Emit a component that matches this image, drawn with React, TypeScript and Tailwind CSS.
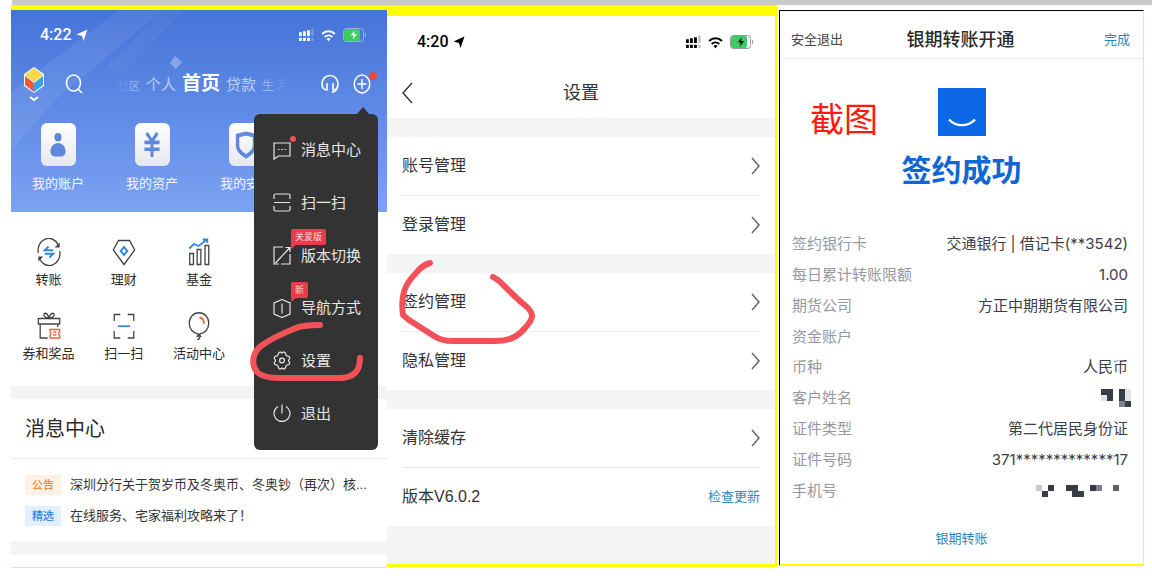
// src/App.tsx
import React from 'react';
import { clsx } from 'clsx';

const CJK = "font-['Liberation_Sans','Noto_Sans_CJK_SC',sans-serif]";

interface StatusBarProps {
  time: string;
  className?: string;
}

const StatusBar: React.FC<StatusBarProps> = ({ time, className }) => (
  <div className={clsx('flex items-center justify-between', className)}>
    <div className="flex items-center gap-1 font-['Roboto',sans-serif] text-base font-medium leading-5">
      <time>{time}</time>
      <svg viewBox="0 0 12 12" className="size-3" fill="currentColor" aria-hidden="true">
        <path d="M11.500 0.500 7.500 12 6 7 0.500 5.500z" />
      </svg>
    </div>
    <div className="flex items-center gap-[7px]">
      {/* dual SIM signal */}
      <svg viewBox="0 0 16 14" className="h-[14px] w-[15px]" fill="currentColor" aria-hidden="true">
        <path d="M0 4h3v4H0zM4.3 3h3v5h-3zM8.6 2h3v6h-3z" />
        <path d="M13 0h2.6v8H13zM13 10h2.6v3.5H13z" opacity="0.25" />
        <path d="M0 10h3v3.5H0zM4.3 10h3v3.5h-3zM8.6 10h3v3.5h-3z" />
      </svg>
      <svg viewBox="0 0 16 13" className="h-[13px] w-[15px]" fill="none" stroke="currentColor" strokeWidth="2.2" aria-hidden="true">
        <path d="M1.2 4.8a9.6 9.6 0 0 1 13.6 0" />
        <path d="M4 8a5.8 5.8 0 0 1 8 0" />
        <path d="M8 12.6 5.8 10.2a3.2 3.2 0 0 1 4.4 0z" fill="currentColor" stroke="none" />
      </svg>
      <svg viewBox="0 0 24 14" className="h-[14px] w-6" aria-hidden="true">
        <rect x="0.5" y="0.5" width="20" height="13" rx="3" fill="none" stroke="currentColor" opacity="0.4" />
        <rect x="1" y="1" width="16" height="12" rx="2" fill="#3ecb62" />
        <path d="M22 4.5v5c1.4-.6 1.4-4.4 0-5z" fill="currentColor" opacity="0.4" />
        <path d="M12 2 7.4 7.6h3L9.6 12l4.8-6h-3.2z" fill="currentColor" stroke="#3ecb62" strokeWidth="0.4" />
      </svg>
    </div>
  </div>
);

/* ---------- Bank home screen ---------- */

const services = [
  {
    label: '我的账户',
    icon: (
      <>
        <circle cx="12" cy="5" r="4" />
        <path d="M12 10.500c5 0 8.500 4 8.500 8 0 3.500-2.500 5-5 5h-7c-2.500 0-5-1.500-5-5 0-4 3.500-8 8.500-8z" />
      </>
    ),
  },
  {
    label: '我的资产',
    icon: <path d="M6 1 12 9 18 1M3.500 10h17M3.500 16.500h17M12 9v15" fill="none" stroke="currentColor" strokeWidth="3.400" />,
  },
  {
    label: '我的安全',
    icon: <path d="M12 1.500 21.500 3.500V13c0 5-4.500 8-9.500 10.500C7 21 2.500 18 2.500 13V3.500z" fill="none" stroke="currentColor" strokeWidth="3.800" />,
  },
];

const shortcuts = [
  {
    label: '转账',
    icon: (
      <>
        <path d="M2.500 15A11.500 12 0 0 1 24 7M25.500 13A11.500 12 0 0 1 4 21" />
        <path d="M25.500 4.500v5H20zM2.500 23.500v-5H8z" fill="currentColor" stroke="none" />
        <path d="M18.500 12.200H9.500l4-3.600M9.500 15.800h9l-4 3.600" stroke="#2f86e0" strokeWidth="2" />
      </>
    ),
  },
  {
    label: '理财',
    icon: (
      <>
        <path d="M8 2.500h12l5.500 9.500L14 26.500 2.500 12z" />
        <path d="m14 9 3.500 4-3.500 4-3.500-4z" stroke="#2f86e0" strokeWidth="2" />
      </>
    ),
  },
  {
    label: '基金',
    icon: (
      <>
        <path d="M4 15.500h4v11H4zM12 11.500h4v15h-4zM20.500 7.500h4v19h-4z" />
        <path d="m3.500 10.500 5-4.500 5 2 8.500-6M18 1.500h5V5" stroke="#2f86e0" strokeWidth="1.800" />
      </>
    ),
  },
  {
    label: '券和奖品',
    icon: (
      <>
        <path d="M2.500 6.500h23v5.500h-23zM4.500 12v14h8M23.500 12v3" />
        <path d="M14 6.500C11 6 8 4.500 8.500 2.500c.5-2 4-2 5.500 4 1.500-6 5-6 5.500-4 .5 2-2.500 3.500-5.500 4z" />
        <path d="M15 17.500h10.500v2.500c-1.500.5-1.500 3 0 3.500v2.500H15v-2.500c1.500-.5 1.500-3 0-3.500zM18.500 20h3.500M18.500 23h3.500" stroke="#e8663c" />
      </>
    ),
  },
  {
    label: '扫一扫',
    icon: (
      <>
        <path d="M3.500 9V2.500H10M18 2.500h6.500V9M24.500 19v7H18M10 26H3.500v-7" />
        <path d="M7.500 14.200h13" stroke="#2f86e0" strokeWidth="1.800" />
      </>
    ),
  },
  {
    label: '活动中心',
    icon: (
      <>
        <path d="M14 22.500C8 21 3.500 17 3.500 11 3.500 5 8 0.800 14 0.800S24.500 5 24.500 11c0 6-4.500 10-10.500 11.500zM14 22.500v2c1 1.500.5 3-2 3.300M11.500 25l2.500-2.500 2.500 2.500" />
        <path d="M14.500 5.500c3 .5 5 3 5 6.500" stroke="#e8663c" strokeWidth="1.800" />
      </>
    ),
  },
];

const notices = [
  { tag: '公告', tagClass: 'bg-[#fdf0e4] text-[#f08a34]', text: '深圳分行关于贺岁币及冬奥币、冬奥钞（再次）核...' },
  { tag: '精选', tagClass: 'bg-[#e2effc] text-[#2f86e0]', text: '在线服务、宅家福利攻略来了！' },
];

interface MenuItem {
  label: string;
  badge?: string;
  dot?: boolean;
  icon: React.ReactNode;
}

const menuItems: MenuItem[] = [
  {
    label: '消息中心',
    dot: true,
    icon: <path d="M1 2h16v13H5.500L1 18zM5 8.500h1.500M8.300 8.500h1.500M11.600 8.500h1.500" />,
  },
  {
    label: '扫一扫',
    icon: <path d="M1 6V2.500Q1 1 2.500 1h13Q17 1 17 2.500V6M1 9.500h16M1 13v3.500Q1 18 2.500 18h13q1.500 0 1.500-1.500V13" />,
  },
  {
    label: '版本切换',
    badge: '关爱版',
    icon: <path d="M10 1H1v17h2M8 18h9V8M2.500 17 16.500 2M12.500 1.500H17V6M1 13v5h5" />,
  },
  {
    label: '导航方式',
    badge: '新',
    icon: <path d="M9 0.500 17 4v11l-8 3.500L1 15V4zM9 4.500v10" />,
  },
  {
    label: '设置',
    icon: (
      <>
        <path d="M6 1.500 7.500 1 9 2l1.500-1 1.500.5 1.500 3.300 2.500.7.800 1.500L15.500 9.500l1.300 2.500-.8 1.500-2.500.7-1.500 3.300-1.500.5L9 17l-1.500 1-1.500-.5-1.500-3.300-2.500-.7-.8-1.500 1.300-2.500L1.200 7 2 5.500l2.500-.7z" />
        <circle cx="9" cy="9.500" r="2.400" />
      </>
    ),
  },
  {
    label: '退出',
    icon: <path d="M5 2.500a8 8 0 1 0 8 0M9 0.500v9" />,
  },
];

const MoreMenu: React.FC = () => (
  <div className="absolute right-[9px] top-[104px] w-[124px] rounded-md bg-[#333333] text-[#e6e6e6]">
    <svg viewBox="0 0 14 8" className="absolute -top-[7px] right-2 h-2 w-[14px]" aria-hidden="true">
      <path d="M0 8 7 0l7 8z" fill="#333333" />
    </svg>
    <ul className="grid h-[336px] grid-rows-6 py-[10px]">
      {menuItems.map((item) => (
        <li key={item.label} className="flex">
          <button type="button" className="relative flex flex-1 items-center gap-[10px] pl-[19px] text-[15px] leading-5">
            <svg viewBox="0 0 18 19" className="h-[19px] w-[18px]" fill="none" stroke="currentColor" strokeWidth="1.200" aria-hidden="true">
              {item.icon}
            </svg>
            {item.label}
            {item.dot && <span className="absolute left-9 top-3 size-[6px] rounded-full bg-[#f0505a]" />}
            {item.badge && (
              <span className="absolute left-[37px] top-0 rounded-xs rounded-bl-none bg-[#ea3a4c] px-1 text-[9px] leading-4 text-[#ffd9dc]">
                {item.badge}
                <svg viewBox="0 0 5 4" className="absolute left-0 top-full h-1 w-[5px]" aria-hidden="true">
                  <path d="M0 0h5L0 4z" fill="#ea3a4c" />
                </svg>
              </span>
            )}
          </button>
        </li>
      ))}
    </ul>
  </div>
);

const HomeScreen: React.FC = () => (
  <section className="relative bg-white">
    <header className="relative overflow-hidden bg-linear-to-b from-[#4573d8] to-[#7ba2f3] text-white">
      <svg viewBox="0 0 376 202" preserveAspectRatio="none" className="absolute inset-0 size-full" aria-hidden="true">
        <path d="M0 82 108 0h44L44 90 0 140z" fill="#fff" opacity="0.07" />
        <path d="M152 0 96 56l14 8L174 0z" fill="#fff" opacity="0.04" />
        <path d="m164 46 7 6-6 7-6-6z" fill="#fff" opacity="0.3" />
      </svg>
      <div className="relative">
        <StatusBar time="4:22" className="h-[50px] pl-[29px] pr-5" />
        <div className="flex h-[48px] items-center px-3">
          <button type="button" aria-label="品牌">
            <svg viewBox="0 0 22 36" className="h-9 w-[22px]" aria-hidden="true">
              <path d="M11 1 21 8v12l-10 7L1 20V8z" fill="#f3f6ff" />
              <path d="m11 2 9 7-9 7-9-7z" fill="#fbd94a" />
              <path d="m2 10 9 7v9l-9-7z" fill="#ef5a3c" />
              <path d="m20 10-9 7v9l9-7z" fill="#3da0e8" />
              <path d="m7 31 4 3 4-3" fill="none" stroke="#fff" strokeWidth="2" />
            </svg>
          </button>
          <button type="button" aria-label="搜索" className="ml-5">
            <svg viewBox="0 0 18 20" className="h-5 w-[18px]" fill="none" stroke="currentColor" strokeWidth="1.600" aria-hidden="true">
              <ellipse cx="8.500" cy="9" rx="7" ry="8" />
              <path d="m13 15 4 4" />
            </svg>
          </button>
          <nav className="flex flex-1 items-baseline justify-center gap-[6px] whitespace-nowrap">
            <a href="#community" className="text-[11px] text-white/40">
              <span className="opacity-30">社</span>区
            </a>
            <a href="#personal" className="text-[15px] text-white/60">个人</a>
            <a href="#home" className="text-[19px] font-bold leading-6">首页</a>
            <a href="#loan" className="text-[15px] text-white/60">贷款</a>
            <a href="#life" className="text-xs text-white/40">
              生<span className="opacity-30">活</span>
            </a>
          </nav>
          <button type="button" aria-label="客服">
            <svg viewBox="0 0 18 20" className="h-5 w-[18px]" fill="none" stroke="currentColor" strokeWidth="1.600" aria-hidden="true">
              <path d="M6 9v7C2.500 16 1 13 1 10c0-5 3.500-8.500 8-8.500s8 3.500 8 8.500c0 4.500-2 7.500-6 8.500" />
              <path d="M12 9v7c2.500 0 4-1.500 4.600-3.500" />
            </svg>
          </button>
          <button type="button" aria-label="更多" className="relative ml-[14px] mr-1">
            <svg viewBox="0 0 18 20" className="h-5 w-[18px]" fill="none" stroke="currentColor" strokeWidth="1.500" aria-hidden="true">
              <ellipse cx="9" cy="10" rx="7.800" ry="9" />
              <path d="M9 5v10M4.500 10h9" />
            </svg>
            <span className="absolute -right-[6px] -top-[2px] size-2 rounded-full bg-[#e8483e]" />
          </button>
        </div>
        <ul className="grid grid-cols-4 pb-[18px] pt-[15px]">
          {services.map((service) => (
            <li key={service.label}>
              <a href="#service" className="flex flex-col items-center gap-2 text-[13px] leading-5 text-white/90">
                <span className="flex h-[43px] w-[35px] items-center justify-center rounded-md bg-linear-to-b from-white to-[#e6e8ee]">
                  <svg viewBox="3 1 18 23" preserveAspectRatio="none" className="h-6 w-4 overflow-visible text-[#5f88dc]" fill="currentColor" aria-hidden="true">
                    {service.icon}
                  </svg>
                </span>
                {service.label}
              </a>
            </li>
          ))}
        </ul>
      </div>
    </header>

    <ul className="grid grid-cols-5 gap-y-[22px] pb-[22px] pt-[26px]">
      {shortcuts.map((item, index) => (
        <li key={item.label} className={clsx(index % 3 === 0 && 'col-start-1')}>
          <a href="#shortcut" className="flex flex-col items-center gap-1 whitespace-nowrap text-[13px] leading-5 text-[#2b2b2b]">
            <svg viewBox="0 0 28 28" preserveAspectRatio="none" className="h-7 w-[26px] text-[#444444]" fill="none" stroke="currentColor" strokeWidth="1.400" aria-hidden="true">
              {item.icon}
            </svg>
            {item.label}
          </a>
        </li>
      ))}
    </ul>

    <div className="border-t-[13px] border-[#f4f4f4]">
      <h2 className="flex h-[60px] items-center border-b border-[#ececec] px-[14px] text-xl text-[#2b2b2b]">消息中心</h2>
      <ul className="flex flex-col gap-[11px] px-[14px] pb-[15px] pt-4">
        {notices.map((notice) => (
          <li key={notice.tag} className="flex gap-[9px] text-[13px] leading-5 text-[#333333]">
            <span className={clsx('w-9 text-center text-[11px] font-medium', notice.tagClass)}>{notice.tag}</span>
            <a href="#notice" className="whitespace-nowrap">{notice.text}</a>
          </li>
        ))}
      </ul>
    </div>
    <div className="h-[26px] border-t-[14px] border-[#f4f4f4]" />

    <MoreMenu />
    {/* hand-drawn mark around 设置 */}
    <svg viewBox="0 0 116 64" className="pointer-events-none absolute right-[22px] top-[309px] h-16 w-[116px]" aria-hidden="true">
      <path
        d="M71 6C62 6 54 6 47 9 32 15 20 21 12 27 3 34 2 46 8 53 13 58 20 59 30 59h60c13 0 21-5 21-20"
        fill="none"
        stroke="#f25257"
        strokeWidth="6"
        strokeLinecap="round"
      />
    </svg>
  </section>
);

/* ---------- Settings screen ---------- */

const settingGroups = [
  ['账号管理', '登录管理'],
  ['签约管理', '隐私管理'],
];

const Chevron: React.FC = () => (
  <svg viewBox="0 0 9 18" className="h-[18px] w-[9px]" fill="none" stroke="#666666" strokeWidth="1.500" aria-hidden="true">
    <path d="m1 1 7 8-7 8" />
  </svg>
);

const SettingRow: React.FC<{ label: string }> = ({ label }) => (
  <li>
    <button type="button" className="flex h-[58px] w-full items-center justify-between">
      {label}
      <Chevron />
    </button>
  </li>
);

const SettingsScreen: React.FC = () => (
  <section className="relative bg-[#f4f4f4] pb-[38px] text-base text-[#333333]">
    <header className="bg-white">
      <StatusBar time="4:20" className="h-[52px] pl-[30px] pr-[21px] text-black" />
      <div className="grid h-[50px] grid-cols-[1fr_auto_1fr] items-center px-[15px]">
        <button type="button" aria-label="返回">
          <svg viewBox="0 0 11 22" className="h-[22px] w-[11px]" fill="none" stroke="#333333" strokeWidth="1.400" aria-hidden="true">
            <path d="M10 1 1 11l9 10" />
          </svg>
        </button>
        <h1 className="text-lg">设置</h1>
      </div>
    </header>
    {settingGroups.map((group) => (
      <ul key={group[0]} className="mt-[19px] divide-y divide-[#ededed] bg-white px-[15px]">
        {group.map((label) => (
          <SettingRow key={label} label={label} />
        ))}
      </ul>
    ))}
    <ul className="mt-[19px] divide-y divide-[#e6e6e6] bg-white px-[15px]">
      <SettingRow label="清除缓存" />
      <li className="flex h-[58px] items-center justify-between">
        版本V6.0.2
        <button type="button" className="text-[13px] text-[#2f87c4]">检查更新</button>
      </li>
    </ul>
    {/* hand-drawn mark around 签约管理 */}
    <svg viewBox="0 0 140 88" className="pointer-events-none absolute left-[10px] top-[243px] h-[88px] w-[140px]" aria-hidden="true">
      <path
        d="M33 4C26 6 23 9 19 14 10 23 7 30 6 37c-1 6-1 12 0 19l6 5 25 16c6 4 11 5 19 5h42c18 0 25-7 30-13 9-10 9-14 2-21-14-11-22-21-29-27l-5-3"
        fill="none"
        stroke="#f25257"
        strokeWidth="6"
        strokeLinecap="round"
        strokeLinejoin="round"
      />
    </svg>
  </section>
);

/* ---------- Contract result screen ---------- */

const NameMosaic = (
  <svg viewBox="0 0 30 18" className="-mr-[3px] ml-auto h-[18px] w-[30px]" role="img" aria-label="已打码">
    <path d="M0 0h12v12H6V6H0zM18 0h6v12h-6zM24 12h6v6h-6z" fill="#363c48" />
    <path d="M18 12h6v6h-6z" fill="#7d828c" />
    <path d="M0 6h6v6H0zM24 0h6v12h-6z" fill="#e2e3e6" />
  </svg>
);

const PhoneMosaic = (
  <svg viewBox="0 0 92 12" className="ml-auto h-3 w-[92px]" role="img" aria-label="已打码">
    <path d="M12 0h6v6h-6zM6 6h6v6H6zM30 0h12v6h6v6H36V6h-6zM54 0h6v6h-6z" fill="#363c48" />
    <path d="M0 0h6v6H0z" fill="#c6c8cc" />
    <path d="M60 0h6v6h-6z" fill="#7d828c" />
    <path d="M77 0h6v6h-6z" fill="#5a5f69" />
  </svg>
);

const details: { label: string; value?: React.ReactNode }[] = [
  { label: '签约银行卡', value: '交通银行 | 借记卡(**3542)' },
  { label: '每日累计转账限额', value: '1.00' },
  { label: '期货公司', value: '方正中期期货有限公司' },
  { label: '资金账户' },
  { label: '币种', value: '人民币' },
  { label: '客户姓名', value: NameMosaic },
  { label: '证件类型', value: '第二代居民身份证' },
  { label: '证件号码', value: '371*************17' },
  { label: '手机号', value: PhoneMosaic },
];

const ResultScreen: React.FC = () => (
  <section className="relative border-b-2 border-l border-r border-t border-b-[#ffff00] border-l-black border-r-[#ffff00] border-t-black bg-white">
    <header className="grid h-12 grid-cols-[1fr_auto_1fr] items-center border-b border-[#ececec] pl-[11px] pr-[13px] pt-[10px]">
      <button type="button" className="justify-self-start text-[13px] text-[#444444]">安全退出</button>
      <h1 className="text-lg font-medium leading-6 text-[#2b2b2b]">银期转账开通</h1>
      <button type="button" className="justify-self-end text-[13px] text-[#2f87b8]">完成</button>
    </header>
    <div className="flex flex-col items-center pt-[29px]">
      <svg viewBox="0 0 48 48" className="size-12" aria-hidden="true">
        <path d="M0 0h48v48H0z" fill="#0c68e4" />
        <path d="M11 31.500c7 7.500 19 7.500 26 0" fill="none" stroke="#fff" strokeWidth="2.400" />
      </svg>
      <p className="mt-[15px] text-[30px] font-bold leading-10 text-[#0f66d6]">签约成功</p>
    </div>
    <div className="pl-3 pr-[15px] pt-[38px]">
      <table className="h-[277px] w-full text-[15px] leading-5">
        <tbody>
          {details.map((row) => (
            <tr key={row.label}>
              <th scope="row" className="p-0 text-left font-normal text-[#9598a0]">{row.label}</th>
              <td className="p-0 text-right font-['Inter','Noto_Sans_CJK_SC',sans-serif] text-[#3c404a]">{row.value}</td>
            </tr>
          ))}
        </tbody>
      </table>
    </div>
    <div className="flex justify-center pb-[15px] pt-[23px]">
      <a href="#transfer" className="text-[13px] leading-5 text-[#2f87b8]">银期转账</a>
    </div>
    {/* annotation */}
    <span className="absolute left-[30px] top-[85px] text-[34px] leading-[48px] text-[#ff1a10]">截图</span>
  </section>
);

const App: React.FC = () => (
  <div className={clsx('bg-white', CJK)}>
    <div className="ml-3 h-[5px] bg-[#c8c8c8]" />
    <main className="flex items-start pl-[11px] pr-2">
      <div className="min-w-0 flex-[376] bg-[#ffff00] pb-px pt-[5px]">
        <HomeScreen />
      </div>
      <div className="min-w-0 flex-[388] bg-[#ffff00] pb-[3px] pr-[2px] pt-[11px]">
        <SettingsScreen />
      </div>
      <div className="ml-[2px] mt-[5px] min-w-0 flex-[365]">
        <ResultScreen />
      </div>
    </main>
  </div>
);

export default App;
